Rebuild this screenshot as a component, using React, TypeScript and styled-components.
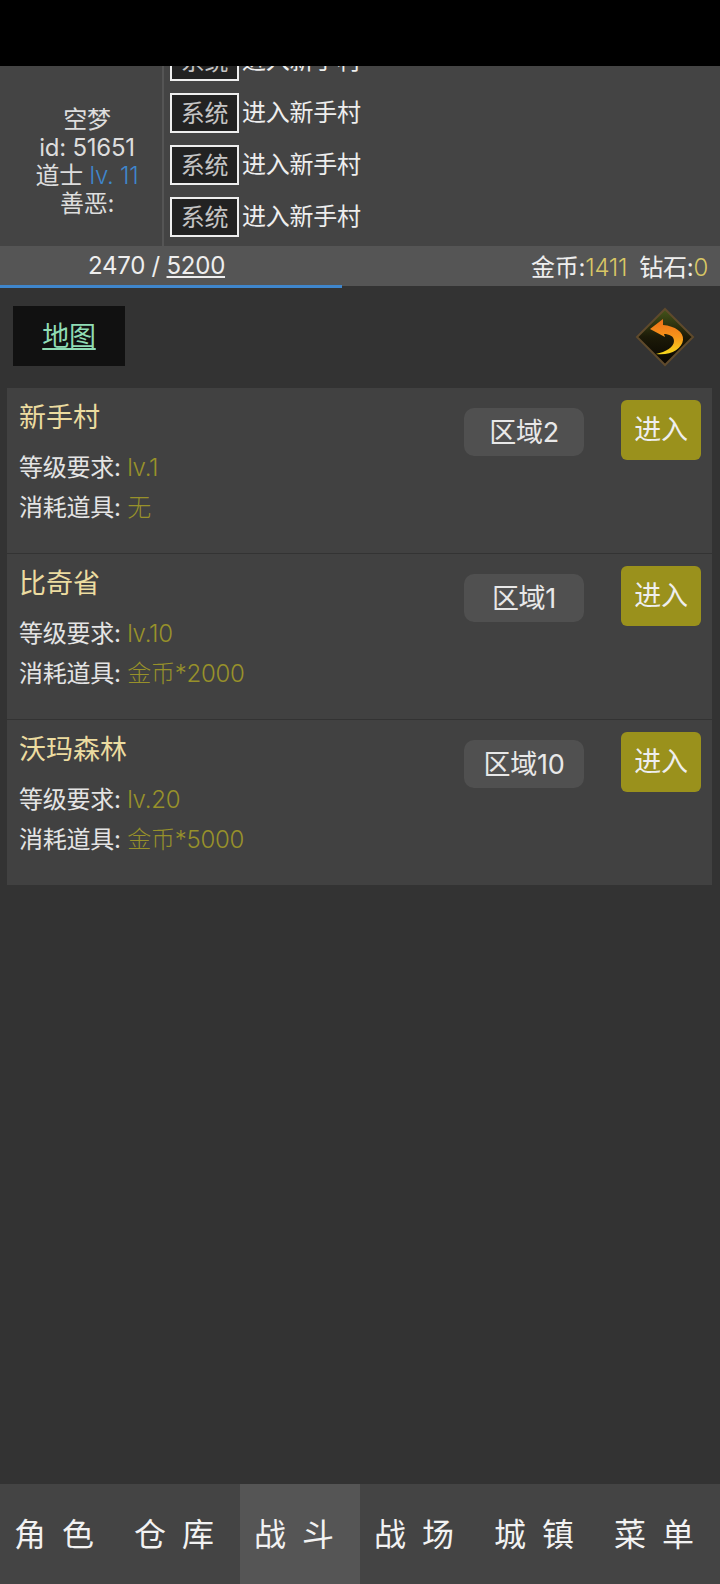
import React from 'react'
import styled, { createGlobalStyle } from 'styled-components'

const GlobalStyle = createGlobalStyle`
  html, body {
    margin: 0;
    padding: 0;
    background: #333;
  }
  * {
    box-sizing: border-box;
  }
`

const logs = ['进入新手村', '进入新手村', '进入新手村', '进入新手村']
const maps = [
  { name: '新手村', level: 'lv.1', cost: '无', area: '区域2' },
  { name: '比奇省', level: 'lv.10', cost: '金币*2000', area: '区域1' },
  { name: '沃玛森林', level: 'lv.20', cost: '金币*5000', area: '区域10' },
]
const tabs = ['角色', '仓库', '战斗', '战场', '城镇', '菜单']

const BackIcon = () => (
  <BackSvg width="60" height="60" viewBox="0 0 60 60">
    <defs>
      <linearGradient id="diamond" x1="0" y1="0" x2="0" y2="1">
        <stop offset="0" stopColor="#45551a" />
        <stop offset="0.5" stopColor="#1c1a08" />
        <stop offset="1" stopColor="#080502" />
      </linearGradient>
      <linearGradient id="arrow" x1="0" y1="0" x2="0" y2="1">
        <stop offset="0" stopColor="#ee6f18" />
        <stop offset="0.5" stopColor="#f7941a" />
        <stop offset="1" stopColor="#f6d81c" />
      </linearGradient>
    </defs>
    <path d="M30 2 L58 30 L30 58 L2 30 Z" fill="url(#diamond)" stroke="#5f4a2c" strokeWidth="2" />
    <path
      d="M15 22 L28 12 L28 18 C40 19 49 25 48 33 C47 42 35 49 21 47 C31 45 39 40 39 34 C39 29 34 27 29 27 L30 30 Z"
      fill="url(#arrow)"
    />
  </BackSvg>
)

export default function App() {
  return (
    <>
      <GlobalStyle />
      <Page>
        <TopBlack />
        <InfoPanel>
          <Profile>
            <div>空梦</div>
            <div>id: 51651</div>
            <div>
              道士 <Level>lv. 11</Level>
            </div>
            <div>善恶:</div>
          </Profile>
          <LogList>
            {logs.map((text, i) => (
              <LogRow key={i}>
                <Tag>系统</Tag>
                <LogText>{text}</LogText>
              </LogRow>
            ))}
          </LogList>
        </InfoPanel>
        <StatusBar>
          <div>
            2470 / <u>5200</u>
          </div>
          <div>
            金币:<Gold>1411</Gold>
            <Spacer />
            钻石:<Gold>0</Gold>
          </div>
          <ExpLine />
        </StatusBar>
        <MapHead>
          <MapButton>地图</MapButton>
          <BackIcon />
        </MapHead>
        <MapList>
          {maps.map((m) => (
            <MapCard key={m.name}>
              <MapInfo>
                <MapName>{m.name}</MapName>
                <Detail>
                  等级要求: <Olive>{m.level}</Olive>
                </Detail>
                <Detail>
                  消耗道具: <Olive>{m.cost}</Olive>
                </Detail>
              </MapInfo>
              <AreaTag>{m.area}</AreaTag>
              <EnterButton>进入</EnterButton>
            </MapCard>
          ))}
        </MapList>
        <Nav>
          {tabs.map((t) => (
            <NavItem key={t} $active={t === '战斗'}>
              {t}
            </NavItem>
          ))}
        </Nav>
      </Page>
    </>
  )
}

const BackSvg = styled.svg`
  margin-top: 2px;
`

const Page = styled.div`
  width: 720px;
  height: 1584px;
  display: flex;
  flex-direction: column;
  overflow: hidden;
  background: #333;
  color: #eee;
  font-family: 'Inter', 'Noto Sans CJK SC', sans-serif;
  font-size: 24px;
  font-weight: 400;
  letter-spacing: -0.25px;
`

const TopBlack = styled.div`
  height: 66px;
  background: #000;
  flex: none;
`

const InfoPanel = styled.div`
  height: 180px;
  flex: none;
  display: flex;
  background: #444;
`

const Profile = styled.div`
  width: 162px;
  flex: none;
  padding: 40px 0 0 12px;
  text-align: center;
  line-height: 28px;
  color: #ddd;
`

const Level = styled.span`
  color: #3f86cc;
  font-weight: 300;
`

const LogList = styled.div`
  flex: 1;
  display: flex;
  flex-direction: column;
  justify-content: flex-end;
  overflow: hidden;
  padding: 0 0 9px 6px;
  border-left: 2px solid #555;
`

const LogRow = styled.div`
  display: flex;
  align-items: center;
  gap: 3px;
  height: 40px;
  flex: none;
  margin-top: 12px;
  color: #eee;
`

const LogText = styled.span`
  padding-bottom: 5px;
`

const Tag = styled.span`
  width: 69px;
  height: 40px;
  padding-bottom: 4px;
  display: flex;
  align-items: center;
  justify-content: center;
  background: #222;
  border: 2px solid #eee;
  color: #c4c4c4;
`

const StatusBar = styled.div`
  position: relative;
  height: 40px;
  flex: none;
  display: flex;
  align-items: center;
  justify-content: space-between;
  padding: 0 12px 2px 88px;
  background: #555;
`

const Gold = styled.span`
  color: #d9c765;
  font-weight: 300;
`

const Spacer = styled.span`
  display: inline-block;
  width: 12px;
`

const ExpLine = styled.div`
  position: absolute;
  left: 0;
  bottom: -2px;
  width: 342px;
  height: 3px;
  background: #3f86cc;
`

const MapHead = styled.div`
  height: 102px;
  flex: none;
  display: flex;
  align-items: center;
  justify-content: space-between;
  padding: 0 25px 2px 13px;
`

const MapButton = styled.div`
  width: 112px;
  height: 60px;
  padding-bottom: 4px;
  display: flex;
  align-items: center;
  justify-content: center;
  background: #111;
  color: #8fdcb4;
  font-size: 27px;
  text-decoration: underline;
`

const MapList = styled.div`
  flex: 1;
  display: flex;
  flex-direction: column;
  gap: 1px;
  padding: 0 8px 0 7px;
`

const MapCard = styled.div`
  height: 165px;
  display: flex;
  align-items: flex-start;
  background: #414141;
  padding: 12px 11px 0 12px;
`

const MapInfo = styled.div`
  flex: 1;
`

const MapName = styled.div`
  font-size: 27px;
  line-height: 36px;
  letter-spacing: 0;
  color: #ecdca0;
  margin-bottom: 12px;
`

const Detail = styled.div`
  line-height: 40px;
  color: #e4e4e4;
`

const Olive = styled.span`
  color: #98912a;
  font-weight: 300;
`

const AreaTag = styled.div`
  width: 120px;
  height: 48px;
  padding-bottom: 4px;
  margin: 8px 37px 0 0;
  display: flex;
  align-items: center;
  justify-content: center;
  border-radius: 10px;
  background: #505050;
  color: #e8e8e8;
  font-size: 27px;
`

const EnterButton = styled.div`
  width: 80px;
  height: 60px;
  padding-bottom: 5px;
  display: flex;
  align-items: center;
  justify-content: center;
  border-radius: 6px;
  background: #9a911c;
  color: #eee;
  font-size: 27px;
`

const Nav = styled.div`
  height: 100px;
  flex: none;
  display: grid;
  grid-template-columns: repeat(6, 120px);
  background: #444;
`

const NavItem = styled.div<{ $active?: boolean }>`
  display: flex;
  align-items: center;
  justify-content: center;
  padding: 0 0 5px 4px;
  letter-spacing: 16px;
  font-size: 32px;
  color: #f2f2f2;
  background: ${(p) => (p.$active ? '#555' : 'transparent')};
`
